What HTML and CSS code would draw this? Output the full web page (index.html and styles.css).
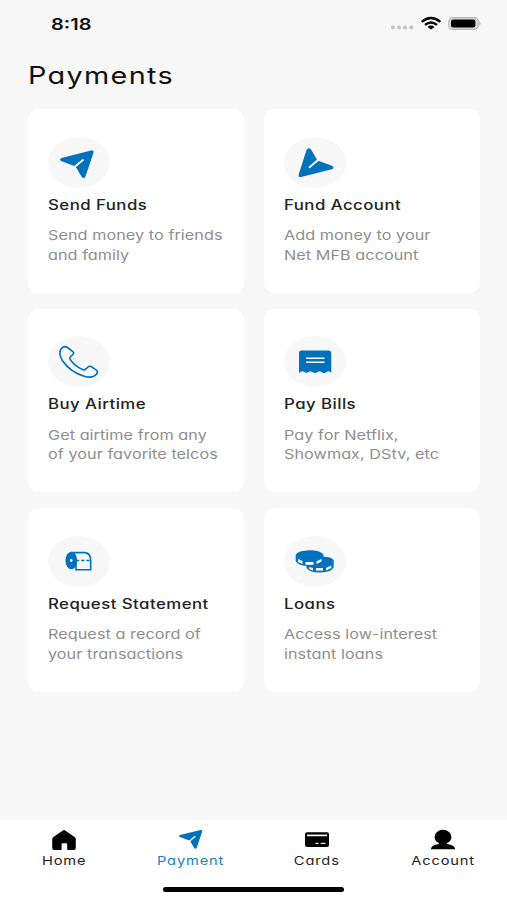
FILE: index.html
```html
<!DOCTYPE html>
<html lang="en">
<head>
    <meta charset="UTF-8">
    <meta name="viewport" content="width=device-width, initial-scale=1.0">
    <title>Payments</title>
    <link rel="stylesheet" href="styles.css">
</head>
<body>
    <div class="screen">
        <header class="status-bar">
            <span class="time">8:18</span>
            <svg class="status-icons" width="92" height="16" viewBox="0 0 92 16">
                <g fill="#c4c4c4">
                    <circle cx="3" cy="11.500" r="2"/>
                    <circle cx="9" cy="11.500" r="2"/>
                    <circle cx="15" cy="11.500" r="2"/>
                    <circle cx="21.300" cy="11.500" r="2"/>
                </g>
                <g fill="none" stroke="#000" stroke-width="2.300">
                    <path d="M31.700 5.800Q41 -1.800 50.300 5.800"/>
                    <path d="M35 8.900Q41 4 47 8.900"/>
                </g>
                <path d="M37.500 11Q41 8.200 44.500 11L41 13.500Z"/>
                <rect x="58.800" y="1.700" width="29.400" height="11.600" rx="4" fill="#ddd" stroke="#b5b5b5" stroke-width="1.200"/>
                <rect x="61" y="3.500" width="24.400" height="8" rx="2"/>
                <path d="M89.500 5.500Q91.500 7.500 89.500 9.500Z" fill="#999"/>
            </svg>
        </header>

        <h1 class="page-title"><span class="wide">Payments</span></h1>

        <main class="cards">
            <div class="card">
                <div class="icon">
                    <svg width="62" height="51" viewBox="0 0 62 51">
                        <path class="solid" d="M13.500 21L43 13.400Q46 13 45.400 16L37.500 39.500Q36 42.500 33.500 39.500L27.500 29.500L13 24Q10.800 22.300 13.500 21Z"/>
                        <path d="M26.800 29.700L35.500 22.500" stroke="#f7f7f7" stroke-width="2"/>
                    </svg>
                </div>
                <h2><span class="wide">Send Funds</span></h2>
                <p><span class="wide">Send money to friends</span><span class="wide">and family</span></p>
            </div>
            <div class="card">
                <div class="icon">
                    <svg width="62" height="51" viewBox="0 0 62 51">
                        <path class="solid" d="M22.500 13Q24.500 9.600 27 12.500L33.500 23.500L48 28.800Q51 30.700 48 32.300L17 40Q14 40.500 14.700 37.500Z"/>
                        <path d="M34 23L25 30.800" stroke="#f7f7f7" stroke-width="2"/>
                    </svg>
                </div>
                <h2><span class="wide">Fund Account</span></h2>
                <p><span class="wide">Add money to your</span><span class="wide">Net MFB account</span></p>
            </div>
            <div class="card">
                <div class="icon">
                    <svg width="62" height="51" viewBox="0 0 62 51">
                        <path class="line" d="M13.300 12.500Q16.500 9.300 19.500 11.500L24.800 15.500Q26.500 17 24.800 18.500L22.200 21Q21.300 22.200 22.500 24Q27.500 30.500 34.500 33.500Q36.500 34.300 37.700 33.200L40 31Q41.700 29.500 43.800 30.800L48.300 34Q50.500 36 48.500 38.300Q45 42.500 37 40.500Q22.500 36.500 14.300 24.500Q10 17 13.300 12.500Z"/>
                    </svg>
                </div>
                <h2><span class="wide">Buy Airtime</span></h2>
                <p><span class="wide">Get airtime from any</span><span class="wide">of your favorite telcos</span></p>
            </div>
            <div class="card">
                <div class="icon">
                    <svg width="62" height="51" viewBox="0 0 62 51">
                        <path class="solid" d="M15 17Q15 14.500 17.500 14.500H45Q47.300 14.500 47.300 17V37Q45.500 34.500 43 35.700Q40 38.500 37 35.700Q35.500 34.600 34 35.700Q31 38.500 28 35.700Q26.500 34.600 25 35.700Q22.500 38 20 35.700Q17.500 34.500 15 37Z"/>
                        <path d="M22 22.300H40.500M22 26.300H40.500" stroke="#fff" stroke-width="1.600"/>
                    </svg>
                </div>
                <h2><span class="wide">Pay Bills</span></h2>
                <p><span class="wide">Pay for Netflix,</span><span class="wide">Showmax, DStv, etc</span></p>
            </div>
            <div class="card">
                <div class="icon">
                    <svg width="62" height="51" viewBox="0 0 62 51">
                        <ellipse class="solid" cx="23.300" cy="24.500" rx="5.800" ry="8.700"/>
                        <path class="line" fill-opacity="0" d="M23 16.600H37Q42.700 17.300 42.700 24.500V33.700H28V25"/>
                        <path class="line" d="M28 24.500H41.500" stroke-dasharray="3.200 2"/>
                        <ellipse cx="23.300" cy="24.500" rx="1.300" ry="1.400" fill="#fff"/>
                    </svg>
                </div>
                <h2><span class="wide">Request Statement</span></h2>
                <p><span class="wide">Request a record of</span><span class="wide">your transactions</span></p>
            </div>
            <div class="card">
                <div class="icon">
                    <svg width="62" height="51" viewBox="0 0 62 51">
                        <path class="solid" d="M22.500 25.500V32Q25.500 36.500 36 36.500Q48.500 36 49.700 31V24.500Q48.500 20.500 36 20.500Q24 20.500 22.500 25.500Z"/>
                        <path class="solid" d="M11.700 19V25Q13.500 30 25.500 30Q38.500 29.500 39.500 24V19Q37.500 14.200 25.500 14.200Q13.500 14.500 11.700 19Z"/>
                        <g fill="#fff">
                            <path d="M14 23L18.500 25V28L14 26Z"/>
                            <path d="M21.500 26H29.500V28.800H21.500Z"/>
                            <path d="M32.500 25.300L37.500 23V25.500L32.500 28Z"/>
                            <path d="M25.300 31L29 32V34.500L25.300 33.200Z"/>
                            <path d="M32 32H39V34.600H32Z"/>
                            <path d="M42 32L47.300 29.500V32L42 34.500Z"/>
                        </g>
                    </svg>
                </div>
                <h2><span class="wide">Loans</span></h2>
                <p><span class="wide">Access low-interest</span><span class="wide">instant loans</span></p>
            </div>
        </main>

        <footer class="bottom">
            <nav class="tabs">
                <a class="tab">
                    <svg width="26" height="22" viewBox="0 0 26 22">
                        <path d="M13 1Q13.800 1 14.500 1.700L23.500 8Q24.800 9 24.800 10.300V19Q24.800 21 22.800 21H16.200V15.500Q16.200 14.300 15 14.300H11.800Q10.600 14.300 10.600 15.500V21H3.300Q1.200 21 1.200 19V10.300Q1.200 9 2.500 8L11.500 1.700Q12.200 1 13 1Z"/>
                    </svg>
                    <span>Home</span>
                </a>
                <a class="tab active">
                    <svg width="26" height="22" viewBox="0 0 26 22">
                        <path class="solid" d="M3 6L23.500 1Q25.500 .7 25.200 2.500L19.800 18.500Q18.500 20.800 17 18.700L13 11.800L3 8Q1.200 6.700 3 6Z"/>
                        <path d="M12.700 12L18.200 7.300" stroke="#fff" stroke-width="1.400"/>
                    </svg>
                    <span>Payment</span>
                </a>
                <a class="tab">
                    <svg width="26" height="22" viewBox="0 0 26 22">
                        <rect x="1" y="3.300" width="24" height="14.700" rx="2"/>
                        <path d="M3 6.400H23" stroke="#fff" stroke-width="1.700"/>
                        <path d="M11.500 14.300H14.500M16.700 14.300H21.500" stroke="#ddd" stroke-width="1.300"/>
                    </svg>
                    <span>Cards</span>
                </a>
                <a class="tab">
                    <svg width="26" height="22" viewBox="0 0 26 22">
                        <ellipse cx="13" cy="8" rx="8.500" ry="7.200"/>
                        <path d="M9 13H17V15Q25 16 25.200 20.300H.8Q1.500 16 9 15Z"/>
                    </svg>
                    <span>Account</span>
                </a>
            </nav>
            <div class="home-indicator"></div>
        </footer>
    </div>
</body>
</html>
```
FILE: styles.css
```css
* {
    box-sizing: border-box;
}

body {
    margin: 0;
    font-family: Inter, "Open Sans", sans-serif;
    font-feature-settings: "cv11";
    background: #f7f7f7;
    color: #222;
}

.screen {
    display: flex;
    flex-direction: column;
    width: 507px;
    height: 900px;
    overflow: hidden;
}

.status-bar {
    display: flex;
    justify-content: space-between;
    height: 48px;
    padding: 16px 25px 0 51px;
}

.time {
    font-size: 16px;
    line-height: 16px;
    font-weight: 600;
    color: #111;
    transform: scaleX(1.25);
    transform-origin: left;
}

.wide {
    display: block;
    width: max-content;
    white-space: nowrap;
    transform: scaleX(1.2);
    transform-origin: left;
}

.page-title {
    margin: 0 0 16px 28px;
    height: 45px;
    font-size: 24px;
    line-height: 55px;
    font-weight: 400;
    letter-spacing: 1.1px;
    color: #111;
}

.cards {
    display: grid;
    grid-template-columns: 216px 216px;
    grid-auto-rows: 183.7px;
    gap: 16px 20px;
    padding-left: 28px;
}

.card {
    padding: 27.5px 20px 0 19.5px;
    border-radius: 11px;
    background: #fff;
}

.icon {
    width: 62px;
    height: 51px;
    border-radius: 50%;
    background: #f7f7f7;
}

.icon svg {
    display: block;
}

.solid {
    fill: #0071bc;
}

.line {
    fill: none;
    stroke: #0071bc;
    stroke-width: 1.6;
}

.card h2 {
    margin: 5px 0 9.5px;
    font-size: 14px;
    line-height: 24px;
    font-weight: 450;
    letter-spacing: 0.38px;
}

.card p {
    margin: 0;
    font-size: 13.5px;
    line-height: 19.7px;
    letter-spacing: 0.05px;
    color: #8e8e8e;
}

.bottom {
    height: 80px;
    margin-top: auto;
    background: #fff;
}

.tabs {
    display: grid;
    grid-template-columns: repeat(4, 126.5px);
    padding-left: 0.5px;
}

.tab {
    display: flex;
    flex-direction: column;
    align-items: center;
    padding-top: 9px;
}

.tab span {
    margin-top: 2px;
    font-size: 12px;
    line-height: 16px;
    letter-spacing: 0.7px;
    transform: scaleX(1.22);
}

.tab.active span {
    color: #1a80c4;
}

.home-indicator {
    width: 181px;
    height: 5px;
    margin: 18px auto 0;
    border-radius: 3px;
    background: #000;
}
```
